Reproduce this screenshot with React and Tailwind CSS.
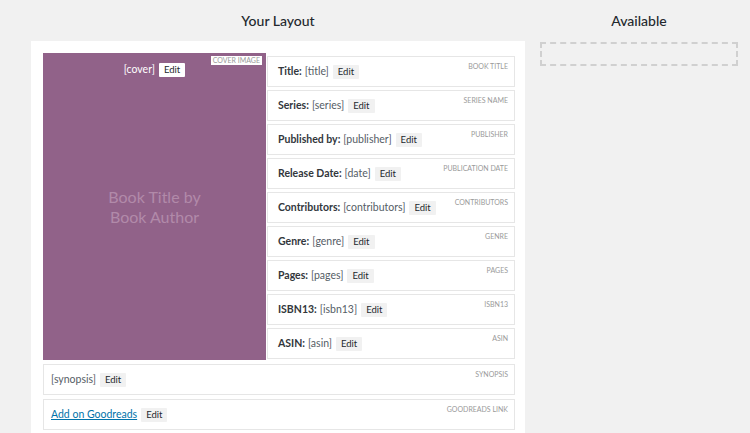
const fields = [
  { label: "Title:", value: "[title]", tag: "Book Title" },
  { label: "Series:", value: "[series]", tag: "Series Name" },
  { label: "Published by:", value: "[publisher]", tag: "Publisher" },
  { label: "Release Date:", value: "[date]", tag: "Publication Date" },
  { label: "Contributors:", value: "[contributors]", tag: "Contributors" },
  { label: "Genre:", value: "[genre]", tag: "Genre" },
  { label: "Pages:", value: "[pages]", tag: "Pages" },
  { label: "ISBN13:", value: "[isbn13]", tag: "ISBN13" },
  { label: "ASIN:", value: "[asin]", tag: "ASIN" },
];

const font = { fontFamily: 'Lato, "Noto Sans", sans-serif' };

const EditButton = ({ light }) => (
  <span
    className={`ml-[4px] inline-block rounded-[1px] px-[5px] text-[9.5px] leading-[14px] text-[#23282d] ${
      light ? "bg-white" : "bg-[#f1f1f1]"
    }`}
  >
    Edit
  </span>
);

const Tag = ({ children, boxed }) => (
  <span
    className={`absolute text-[7px] uppercase leading-[9px] text-[#9a9a9a] ${
      boxed ? "right-[4px] top-[3px] bg-white px-[2px]" : "right-[6px] top-[5px]"
    }`}
  >
    {children}
  </span>
);

const FieldRow = ({ label, value, tag }) => (
  <div className="relative mt-[3px] flex h-[31px] items-center border border-[#e6e6e6] bg-white pl-[10px] text-[10.5px] text-[#32373c]">
    <span className="font-bold">{label}</span>
    <span className="ml-[3px] text-[#555d66]">{value}</span>
    <EditButton />
    <Tag>{tag}</Tag>
  </div>
);

export default function App() {
  return (
    <div className="flex min-h-[433px] bg-[#f1f1f1] pl-[31px]" style={font}>
      <div className="w-[494px]">
        <h2 className="flex h-[41px] items-center justify-center text-[14px] font-medium text-[#23282d]">
          Your Layout
        </h2>
        <div className="bg-white pb-[4px] pl-[12px] pr-[10px] pt-[12px]">
          <div className="flex">
            <div className="relative flex h-[307px] w-[223px] flex-col items-center bg-[#916289]">
              <div className="mt-[9px] flex items-center text-[10.5px] text-white">
                [cover]
                <EditButton light />
              </div>
              <div className="flex flex-1 items-center pb-[24px] text-center text-[16px] leading-[20px] text-[#b18aa9]">
                Book Title by
                <br />
                Book Author
              </div>
              <Tag boxed>Cover Image</Tag>
            </div>
            <div className="flex-1 pl-[1px]">
              {fields.map((f) => (
                <FieldRow key={f.tag} {...f} />
              ))}
            </div>
          </div>
          <div className="relative mt-[4px] flex h-[31px] items-center border border-[#e6e6e6] pl-[7px] text-[10.5px] text-[#555d66]">
            [synopsis]
            <EditButton />
            <Tag>Synopsis</Tag>
          </div>
          <div className="relative mt-[4px] flex h-[31px] items-center border border-[#e6e6e6] pl-[7px] text-[10.5px]">
            <a href="#" className="text-[#0073aa] underline">
              Add on Goodreads
            </a>
            <EditButton />
            <Tag>Goodreads Link</Tag>
          </div>
        </div>
      </div>
      <div className="ml-[15px] w-[198px]">
        <h2 className="flex h-[41px] items-center justify-center text-[14px] font-medium text-[#23282d]">
          Available
        </h2>
        <div className="mt-[1px] h-[24px] border-2 border-dashed border-[#d0d0d0]" />
      </div>
    </div>
  );
}
